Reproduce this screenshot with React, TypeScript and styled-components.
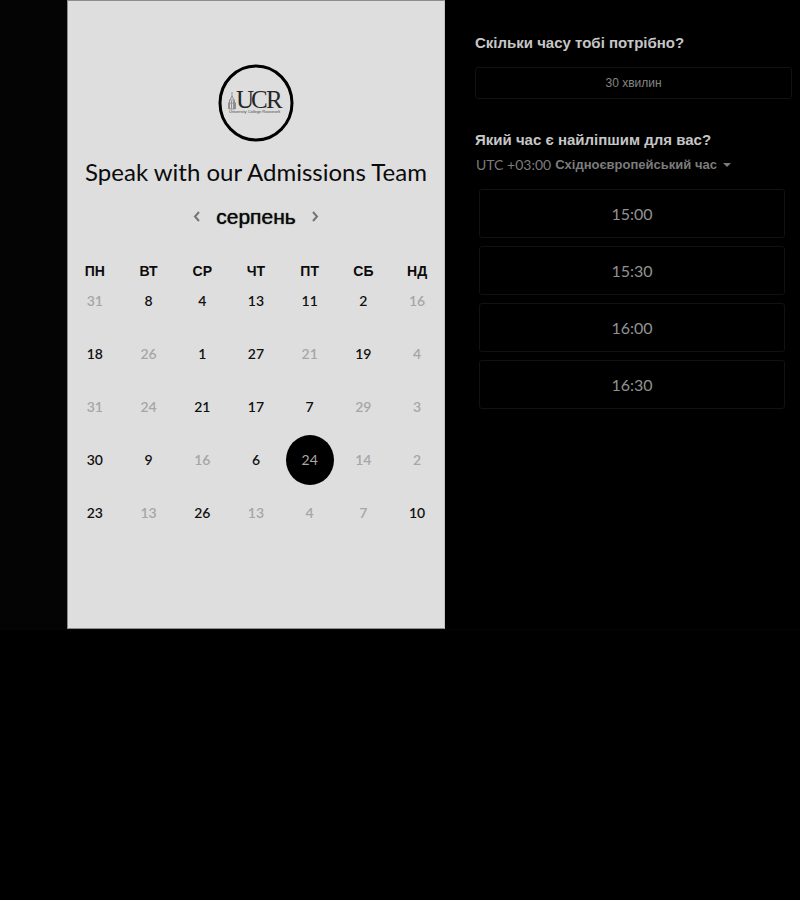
import React, { useState } from "react";
import styled, { createGlobalStyle } from "styled-components";

const GlobalStyle = createGlobalStyle`
  *, *::before, *::after { box-sizing: border-box; }
  body {
    margin: 0;
    background: #000;
    font-family: "Liberation Sans", sans-serif;
  }
  button { font: inherit; color: inherit; background: none; border: 0; padding: 0; cursor: pointer; }
  h1, h2, p { margin: 0; }
`;

const Page = styled.main`
  display: grid;
  grid-template-columns: minmax(0, 67fr) minmax(0, 378fr) minmax(0, 355fr);
  border-bottom: 1px solid #050505;
`;

const Gutter = styled.div`
  background: #040404;
`;

const CalendarPanel = styled.section`
  display: flex;
  flex-direction: column;
  align-items: center;
  padding: 63px 0 80px;
  background: #dedede;
  border: 1px solid #8c8c8c;
  border-right-color: #c4c4c4;
  color: #0b0b0b;
`;

const Logo = styled.svg`
  width: 76px;
  height: 78px;
`;

const Title = styled.h1`
  margin-top: 14px;
  font: 400 24px/32px Lato, sans-serif;
  white-space: nowrap;
`;

const MonthBar = styled.div`
  display: flex;
  align-items: center;
  gap: 12px;
  margin-top: 13px;
`;

const MonthName = styled.h2`
  font-size: 21px;
  line-height: 32px;
  font-weight: 400;
  text-shadow: 0 0 1px #0b0b0b;
`;

const ArrowButton = styled.button`
  display: flex;
  align-items: center;
  justify-content: center;
  width: 14px;
  height: 24px;
  color: #747474;
`;

const Calendar = styled.table`
  width: 100%;
  margin-top: 26px;
  table-layout: fixed;
  border-collapse: collapse;
`;

const Weekday = styled.th`
  height: 24px;
  padding: 0;
  font-size: 14px;
  line-height: 24px;
`;

const DayCell = styled.td`
  height: 53px;
  padding: 0;
  vertical-align: top;
`;

const DayButton = styled.button<{ $selected: boolean }>`
  position: relative;
  z-index: 0;
  display: block;
  width: 100%;
  font: 600 14px/36px Lato, sans-serif;
  color: ${(p) => (p.$selected ? "#a8a8a8" : "#101010")};
  font-weight: ${(p) => (p.$selected ? 400 : 600)};

  &:disabled { color: #a6a6a6; cursor: default; }

  &::before {
    content: "";
    display: ${(p) => (p.$selected ? "block" : "none")};
    position: absolute;
    z-index: -1;
    inset: 50% auto auto 50%;
    width: 48px;
    height: 50px;
    border-radius: 50%;
    background: #000;
    transform: translate(-50%, -50%);
  }
`;

const BookingPanel = styled.section`
  padding: 33px 8px 32px 30px;
  color: #c6c6c6;
`;

const Question = styled.h2`
  font-size: 15px;
  line-height: 20px;
  font-weight: 700;
`;

const Duration = styled.button`
  display: block;
  width: 100%;
  height: 32px;
  margin: 14px 0 31px;
  border: 1px solid #121212;
  border-radius: 3px;
  font-size: 12px;
  color: #858585;
`;

const Timezone = styled.label`
  position: relative;
  display: inline-flex;
  align-items: center;
  gap: 4px;
  margin-top: 5px;
  padding-left: 1px;
  color: #7c7c7c;
  font-size: 14px;
  line-height: 20px;
  white-space: nowrap;
`;

const Offset = styled.span`
  font-family: Lato, sans-serif;
`;

const ZoneName = styled.span`
  font-weight: 700;
  font-size: 13px;
`;

const ZoneSelect = styled.select`
  position: absolute;
  inset: 0;
  width: 100%;
  opacity: 0;
  cursor: pointer;
`;

const SlotList = styled.div`
  display: grid;
  gap: 8px;
  margin: 14px 7px 0 4px;
`;

const Slot = styled.button`
  height: 49px;
  border: 1px solid #121212;
  border-radius: 3px;
  font: 400 16px/24px Lato, sans-serif;
  color: #929292;
`;

const weekdays = ["ПН", "ВТ", "СР", "ЧТ", "ПТ", "СБ", "НД"];

type Day = { n: number; off?: boolean };
const on = (n: number): Day => ({ n });
const off = (n: number): Day => ({ n, off: true });

const weeks: Day[][] = [
  [off(31), on(8), on(4), on(13), on(11), on(2), off(16)],
  [on(18), off(26), on(1), on(27), off(21), on(19), off(4)],
  [off(31), off(24), on(21), on(17), on(7), off(29), off(3)],
  [on(30), on(9), off(16), on(6), on(24), off(14), off(2)],
  [on(23), off(13), on(26), off(13), off(4), off(7), on(10)],
];

const slots = ["15:00", "15:30", "16:00", "16:30"];

function UcrLogo() {
  return (
    <Logo viewBox="0 0 76 78" role="img" aria-label="UCR">
      <ellipse cx="38" cy="39" rx="36" ry="37" fill="none" stroke="#000" strokeWidth="3" />
      <g fill="none" stroke="#8f8f8f" strokeWidth="1">
        <path d="M14 28v5M12 36l2-4 2 4M11.500 36h5v9h-5zM13.500 37v8M15.500 37v8M10 39h8M10.500 39v6M17.500 39v6" />
      </g>
      <text y="44" fontFamily="Liberation Serif, serif" fontSize="25" fill="#262626">
        <tspan x="18">U</tspan>
        <tspan x="33">C</tspan>
        <tspan x="48">R</tspan>
      </text>
      <text x="11" y="49" fontFamily="Liberation Sans, sans-serif" fontSize="4" fill="#4a4a4a">
        University College Roosevelt
      </text>
    </Logo>
  );
}

function Chevron({ d }: { d: string }) {
  return (
    <svg width="8" height="12" viewBox="0 0 8 12" fill="none" stroke="currentColor" strokeWidth="2" aria-hidden="true">
      <path d={d} />
    </svg>
  );
}

export default function App() {
  const [selected, setSelected] = useState("3-4");

  return (
    <>
      <GlobalStyle />
      <Page>
        <Gutter />
        <CalendarPanel>
          <UcrLogo />
          <Title>Speak with our Admissions Team</Title>
          <MonthBar>
            <ArrowButton aria-label="Попередній місяць"><Chevron d="M6 1 2 5.500l4 4.500" /></ArrowButton>
            <MonthName>серпень</MonthName>
            <ArrowButton aria-label="Наступний місяць"><Chevron d="m2 1 4 4.500-4 4.500" /></ArrowButton>
          </MonthBar>
          <Calendar>
            <thead>
              <tr>{weekdays.map((d) => <Weekday key={d} scope="col">{d}</Weekday>)}</tr>
            </thead>
            <tbody>
              {weeks.map((week, w) => (
                <tr key={w}>
                  {week.map((day, i) => {
                    const id = `${w}-${i}`;
                    return (
                      <DayCell key={id}>
                        <DayButton
                          $selected={selected === id}
                          aria-pressed={selected === id}
                          disabled={day.off}
                          onClick={() => setSelected(id)}
                        >
                          {day.n}
                        </DayButton>
                      </DayCell>
                    );
                  })}
                </tr>
              ))}
            </tbody>
          </Calendar>
        </CalendarPanel>
        <BookingPanel>
          <Question>Скільки часу тобі потрібно?</Question>
          <Duration>30 хвилин</Duration>
          <Question>Який час є найліпшим для вас?</Question>
          <Timezone>
            <Offset>UTC +03:00</Offset>
            <ZoneName>Східноєвропейський час</ZoneName>
            <svg width="12" height="6" viewBox="0 0 12 6" aria-hidden="true">
              <path d="M2 1h8L6 5z" fill="currentColor" />
            </svg>
            <ZoneSelect aria-label="Часовий пояс">
              <option>UTC +03:00 Східноєвропейський час</option>
            </ZoneSelect>
          </Timezone>
          <SlotList>
            {slots.map((s) => <Slot key={s}>{s}</Slot>)}
          </SlotList>
        </BookingPanel>
      </Page>
    </>
  );
}
